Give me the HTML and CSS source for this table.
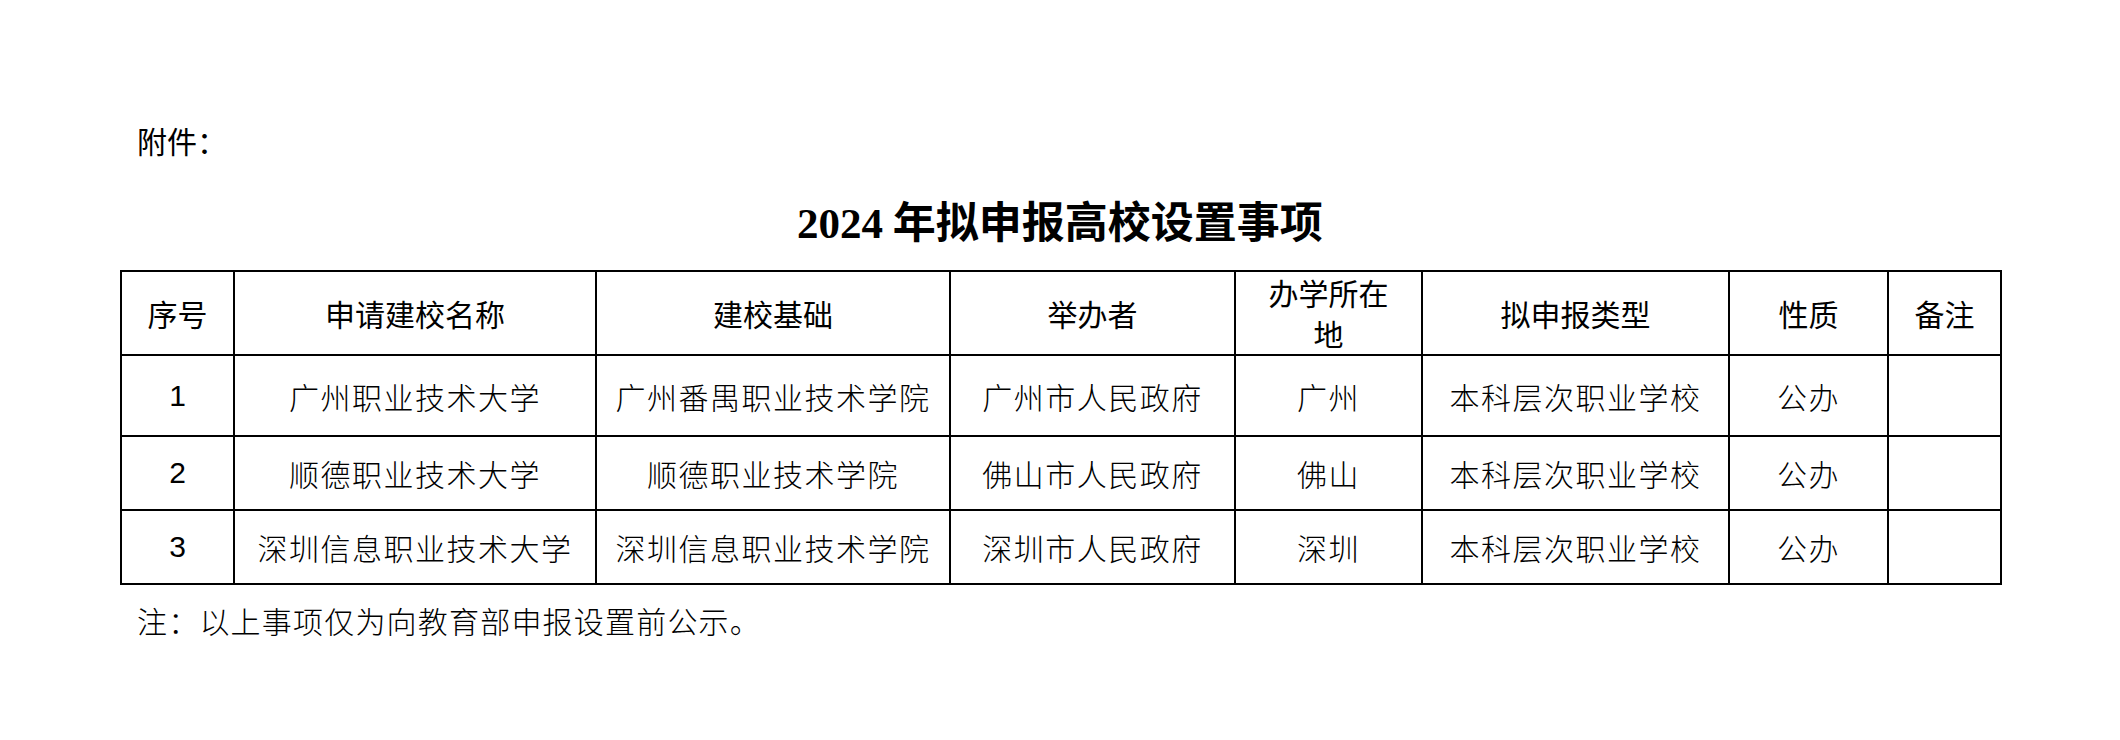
FILE: index.html
```html
<!DOCTYPE html>
<html lang="zh-CN">
<head>
<meta charset="utf-8">
<title>2024年拟申报高校设置事项</title>
<link rel="stylesheet" href="styles.css">
</head>
<body>
<div class="page">
  <p class="attach">附件：</p>
  <h1 class="title"><span class="num">2024</span> 年拟申报高校设置事项</h1>
  <table class="grid">
    <colgroup>
      <col class="c-no">
      <col class="c-name">
      <col class="c-base">
      <col class="c-org">
      <col class="c-loc">
      <col class="c-type">
      <col class="c-kind">
      <col class="c-memo">
    </colgroup>
    <thead>
      <tr class="row-head">
        <th>序号</th>
        <th>申请建校名称</th>
        <th>建校基础</th>
        <th>举办者</th>
        <th>办学所在<br>地</th>
        <th>拟申报类型</th>
        <th>性质</th>
        <th>备注</th>
      </tr>
    </thead>
    <tbody>
      <tr class="row-1">
        <td class="n">1</td>
        <td>广州职业技术大学</td>
        <td>广州番禺职业技术学院</td>
        <td>广州市人民政府</td>
        <td>广州</td>
        <td>本科层次职业学校</td>
        <td>公办</td>
        <td></td>
      </tr>
      <tr class="row-n">
        <td class="n">2</td>
        <td>顺德职业技术大学</td>
        <td>顺德职业技术学院</td>
        <td>佛山市人民政府</td>
        <td>佛山</td>
        <td>本科层次职业学校</td>
        <td>公办</td>
        <td></td>
      </tr>
      <tr class="row-n">
        <td class="n">3</td>
        <td>深圳信息职业技术大学</td>
        <td>深圳信息职业技术学院</td>
        <td>深圳市人民政府</td>
        <td>深圳</td>
        <td>本科层次职业学校</td>
        <td>公办</td>
        <td></td>
      </tr>
    </tbody>
  </table>
  <p class="note">注：以上事项仅为向教育部申报设置前公示。</p>
</div>
</body>
</html>
```

FILE: styles.css
```css
html, body {
  margin: 0;
  padding: 0;
  background: #ffffff;
  color: #000000;
}

.page {
  width: 2120px;
  box-sizing: border-box;
  padding: 0 120px;
  font-family: "Noto Sans CJK SC", "Noto Sans", sans-serif;
}

.attach {
  margin: 0;
  padding: 120px 0 0 17px;
  font-size: 30px;
  line-height: 40px;
  font-weight: 400;
}

.title {
  margin: 29px 0 0 0;
  text-align: center;
  font-size: 43px;
  line-height: 60px;
  font-weight: 700;
  font-family: "Noto Sans CJK SC", sans-serif;
}

.title .num {
  font-family: "Liberation Serif", "Noto Sans CJK SC", serif;
  font-weight: 700;
}

.grid {
  margin-top: 16px;
  width: 1880px;
  table-layout: fixed;
  border-collapse: collapse;
  border: 2px solid #000;
}

.c-no { width: 113px; }
.c-name { width: 362px; }
.c-base { width: 354px; }
.c-org { width: 285px; }
.c-loc { width: 187px; }
.c-type { width: 307px; }
.c-kind { width: 159px; }
.c-memo { width: 113px; }

.grid th,
.grid td {
  border: 2px solid #000;
  padding: 0;
  text-align: center;
  vertical-align: middle;
  white-space: nowrap;
}

.grid th {
  font-size: 30px;
  line-height: 41px;
  font-weight: 400;
}

.grid td {
  font-size: 30px;
  line-height: 40px;
  font-weight: 300;
  letter-spacing: 1.5px;
}

.grid td.n {
  font-family: "Liberation Sans", sans-serif;
  font-size: 30px;
  letter-spacing: 0;
}

.row-head { height: 84px; }
.row-1 { height: 81px; }
.row-n { height: 74px; }

.note {
  margin: 15px 0 0 0;
  padding-left: 17px;
  font-size: 30px;
  line-height: 40px;
  font-weight: 300;
  letter-spacing: 1.2px;
}
```
